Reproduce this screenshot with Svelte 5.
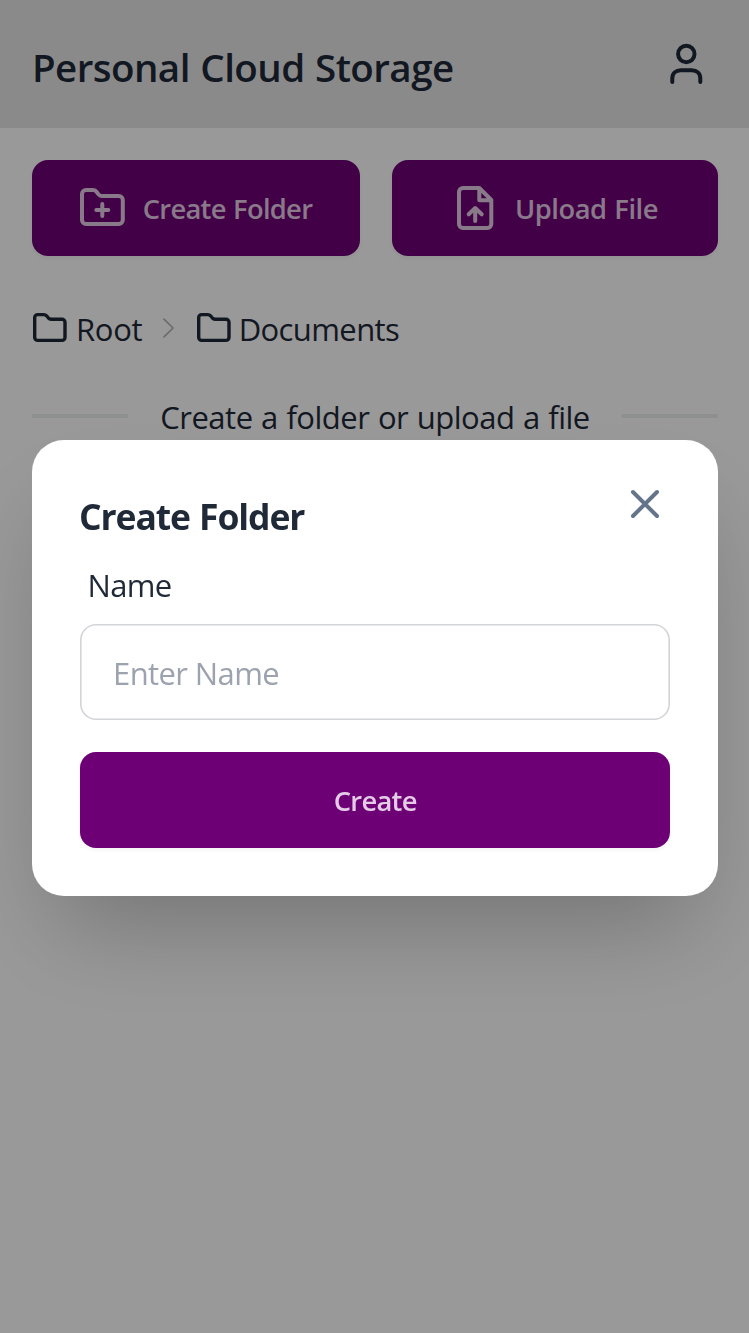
<script>
  let name = $state('');
  const crumbs = ['Root', 'Documents'];
</script>

<div class="page">
  <header>
    <h1><span>Personal Cloud Storage</span></h1>
    <svg class="user" width="36" height="44" viewBox="0 0 36 44">
      <circle cx="18.3" cy="12" r="8.2" />
      <path d="M4.3 39.9v-3.4c0-5 3.5-8.3 8.5-8.3h11c5 0 8.5 3.3 8.5 8.3v3.4" />
    </svg>
  </header>

  <main>
    <div class="actions">
      <button class="primary folder-action">
        <svg width="48" height="48" viewBox="0 0 48 48">
          <path d="M4 10a4 4 0 0 1 4-4h7.2a4 4 0 0 1 3.3 1.8l2 2.6a4 4 0 0 0 3.3 1.6h17a4 4 0 0 1 4 4v20a4 4 0 0 1-4 4H8a4 4 0 0 1-4-4z" />
          <path d="M24.3 20v12M18.3 26h12" />
        </svg>
        <span>Create Folder</span>
      </button>
      <button class="primary upload">
        <svg width="48" height="48" viewBox="0 0 48 48">
          <path d="M28.3 4H12a4 4 0 0 0-4 4v32a4 4 0 0 0 4 4h24.3a4 4 0 0 0 4-4V16L28.3 4v12.3h12" />
          <path d="M24.2 37V24M17.7 30.3l6.5-6.3 6.5 6.3" />
        </svg>
        <span>Upload File</span>
      </button>
    </div>

    <nav>
      {#each crumbs as crumb, i}
        {#if i > 0}
          <svg class="chevron" width="12" height="20" viewBox="0 0 12 20"><path d="M1 1.2l9 8.8-9 8.8" /></svg>
        {/if}
        <div class="crumb" class:current={i === crumbs.length - 1}>
          <svg class="folder" width="36" height="32" viewBox="0 0 36 32">
            <path d="M2.7 5.6a3 3 0 0 1 3-3h6.1c1.2 0 2 .3 2.8 1.2l1.6 2c.8.9 1.6 1.4 2.8 1.4h11a3 3 0 0 1 3 3v15.2a3 3 0 0 1-3 3H5.7a3 3 0 0 1-3-3z" />
          </svg>
          <span>{crumb}</span>
        </div>
      {/each}
    </nav>

    <div class="divider"><i></i><span>Create a folder or upload a file</span><i></i></div>
  </main>
</div>

<div class="overlay">
  <section class="modal">
    <div class="modal-head">
      <h2><span>Create Folder</span></h2>
      <svg class="close" width="32" height="32" viewBox="0 0 32 32"><path d="M4 4l24 24M28 4L4 28" /></svg>
    </div>
    <label for="name"><span>Name</span></label>
    <input id="name" placeholder="Enter Name" bind:value={name} />
    <button class="primary create"><span>Create</span></button>
  </section>
</div>

<style>
  :global(body) { margin: 0; overflow: hidden; }
  .page, .overlay { font-family: "Open Sans", "Noto Sans", sans-serif; font-weight: 400; color: #1f2937; }
  .page { height: 1333px; background: #fff; }
  * { box-sizing: border-box; }
  h1, h2 { margin: 0; }
  span { white-space: nowrap; }
  svg { fill: none; stroke: currentColor; stroke-width: 4; stroke-linecap: round; stroke-linejoin: round; flex: none; display: block; }
  header {
    height: 128px; background: #e7e7e7; display: flex; align-items: center;
    justify-content: space-between; padding: 0 45px 0 32px;
  }
  h1 { font-size: 38.5px; font-weight: 600; line-height: 56px; padding-top: 6px; letter-spacing: -0.55px; word-spacing: 1px; }
  main { padding: 32px 31px 0 32px; }
  .actions { display: grid; grid-template-columns: 328px 326px; gap: 32px; }
  .primary {
    height: 96px; border: 0; border-radius: 16px; background: #6e0076; color: #e4cbe6;
    display: flex; align-items: center; justify-content: center; gap: 17px; padding: 0;
    font: 600 27.3px/32px "Open Sans", "Noto Sans", sans-serif; letter-spacing: -0.7px; word-spacing: 1px;
    box-shadow: 0 2px 4px rgba(0, 0, 0, .05);
  }
  .primary span { padding-top: 2px; }
  .folder-action { padding-right: 2px; }
  .upload { padding-right: 1px; gap: 16px; letter-spacing: -0.45px; }
  nav { display: flex; align-items: center; height: 48px; margin-top: 48px; font-size: 31px; }
  .crumb { display: flex; align-items: center; gap: 8px; line-height: 48px; letter-spacing: -0.3px; }
  .crumb.current { letter-spacing: -0.6px; gap: 7px; }
  .crumb span { padding-top: 2px; }
  .folder { stroke-width: 3.4; }
  .chevron { stroke: #b4b4b4; stroke-width: 1.7; margin: 0 20.4px 0 21px; }
  .divider {
    display: flex; align-items: center; justify-content: space-between; height: 32px; margin-top: 48px;
    font-size: 31px; line-height: 32px; letter-spacing: -0.5px; word-spacing: 1px;
  }
  .divider span { padding-top: 2px; }
  .divider i { width: 96px; height: 4px; background: #edeeef; }
  .overlay { position: fixed; inset: 0; background: rgba(0, 0, 0, .4); padding: 440px 30.6px 0 32px; }
  .modal {
    height: 456px; background: #fff; border-radius: 32px; padding: 48px;
    display: flex; flex-direction: column; box-shadow: 0 50px 100px -24px rgba(0, 0, 0, .25);
  }
  .modal-head { display: flex; justify-content: space-between; height: 64px; padding-right: 9.6px; }
  h2 { font-size: 35.5px; font-weight: 700; line-height: 56px; margin-left: -1px; letter-spacing: -1.1px; word-spacing: 1px; }
  .close { color: #64748b; }
  label { padding: 9px 8px 0 7.5px; height: 72px; font-size: 31px; line-height: 48px; letter-spacing: -0.7px; }
  input {
    height: 96px; border: 0; border-radius: 16px; padding: 2px 33px 0; outline: 0;
    box-shadow: inset 0 0 0 1.6px #d2d4d7;
    font: 400 31px/48px "Open Sans", "Noto Sans", sans-serif; letter-spacing: -0.6px; color: #1f2937; background: #fff;
  }
  input::placeholder { color: #9ca3af; opacity: 1; }
  .create { margin-top: 32px; }
</style>
